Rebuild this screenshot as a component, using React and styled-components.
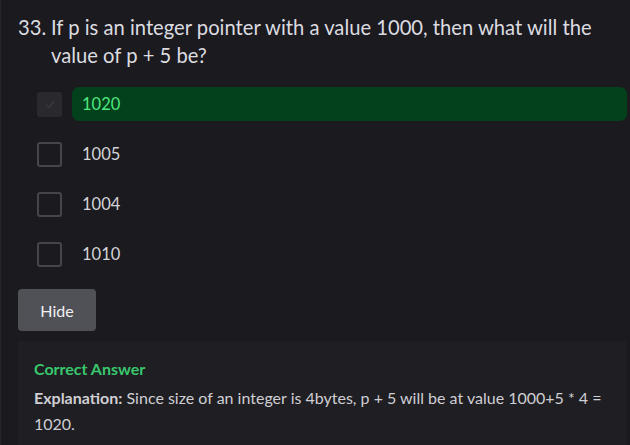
import React from 'react';
import styled, { createGlobalStyle } from 'styled-components';

const GlobalStyle = createGlobalStyle`
    html, body {
        margin: 0;
        padding: 0;
        background: #1b1a1f;
    }
    body {
        font-family: Lato, "Liberation Sans", sans-serif;
        color: #d4d4d8;
    }
`;

const options = [
    { id: 1, text: '1020', correct: true },
    { id: 2, text: '1005' },
    { id: 3, text: '1004' },
    { id: 4, text: '1010' },
];

const App = () => {
    return (
        <>
            <GlobalStyle />
            <Wrapper>
                <Question>
                    <Num>33.</Num>
                    <span>If p is an integer pointer with a value 1000, then what will the value of p + 5 be?</span>
                </Question>
                <Options>
                    {options.map((item) => {
                        return (
                            <Option key={item.id}>
                                <Box $checked={item.correct}>
                                    {item.correct && (
                                        <svg width="14" height="14" viewBox="0 0 14 14">
                                            <path d="M3 7.5 L6 10.5 L11 4" stroke="#38373d" strokeWidth="1.6" fill="none" />
                                        </svg>
                                    )}
                                </Box>
                                <Label $correct={item.correct}>{item.text}</Label>
                            </Option>
                        )
                    })}
                </Options>
                <Button>Hide</Button>
                <Answer>
                    <h4>Correct Answer</h4>
                    <p>
                        <b>Explanation:</b>{' '}Since size of an integer is 4bytes, p + 5 will be at value 1000+5 * 4 = 1020.
                    </p>
                </Answer>
            </Wrapper>
        </>
    );
}

const Wrapper = styled.div`
    padding: 13px 0 0 17px;
    min-height: 445px;
    box-sizing: border-box;
    border-left: 1px solid #26252b;
`;

const Question = styled.div`
    display: flex;
    font-size: 20.2px;
    line-height: 28px;
    color: #dcdce0;
    padding-right: 24px;
`;

const Num = styled.span`
    width: 33px;
    flex-shrink: 0;
`;

const Options = styled.div`
    margin-top: 18px;
    display: flex;
    flex-direction: column;
    gap: 16px;
`;

const Option = styled.div`
    display: flex;
    align-items: center;
    height: 34px;
`;

const Box = styled.div`
    width: 25px;
    height: 25px;
    margin-left: 19px;
    box-sizing: border-box;
    border-radius: 3px;
    border: ${({ $checked }) => ($checked ? 'none' : '2px solid #45454b')};
    background: ${({ $checked }) => ($checked ? '#2a292e' : 'transparent')};
    display: flex;
    align-items: center;
    justify-content: center;
`;

const Label = styled.div`
    flex: 1;
    margin-left: 10px;
    margin-right: 3px;
    height: 34px;
    display: flex;
    align-items: center;
    padding-left: 10px;
    border-radius: 7px;
    font-size: 16.5px;
    background: ${({ $correct }) => ($correct ? '#02411b' : 'transparent')};
    color: ${({ $correct }) => ($correct ? '#4fe680' : '#d4d4d8')};
`;

const Button = styled.button`
    margin-top: 18px;
    width: 78px;
    height: 42px;
    border: none;
    border-radius: 4px;
    background: #4f5157;
    color: #f0f0f2;
    font-family: Lato, "Liberation Sans", sans-serif;
    font-size: 16px;
`;

const Answer = styled.div`
    margin: 10px 4px 0 0;
    background: #1f1e23;
    padding: 18px 16px 10px 16px;
    h4 {
        margin: 0;
        color: #38c76c;
        font-size: 16px;
        font-weight: 700;
    }
    p {
        margin: 7px 0 0 0;
        font-size: 16px;
        line-height: 26px;
        color: #cfcfd3;
    }
    b {
        font-weight: 700;
    }
`;

export default App;
